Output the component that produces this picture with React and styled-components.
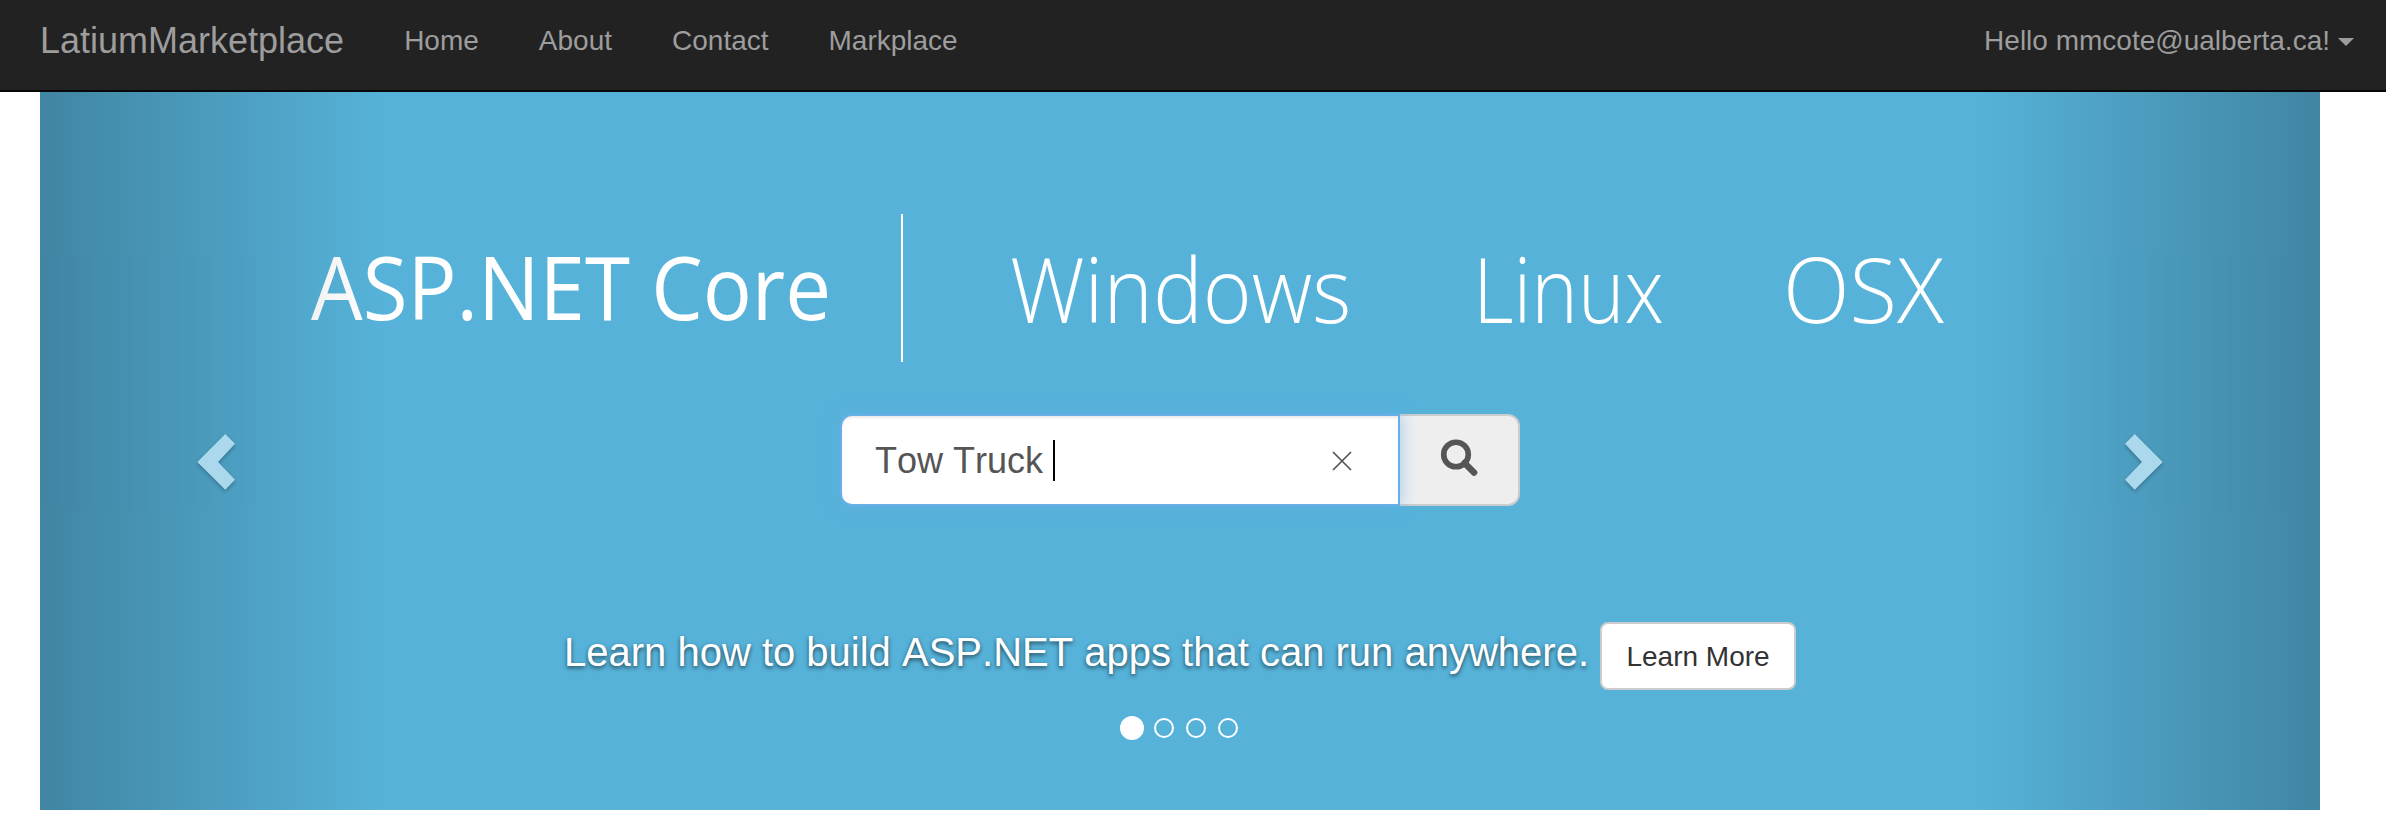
import React from 'react';
import styled, { createGlobalStyle } from 'styled-components';

const GlobalStyle = createGlobalStyle`
  * { box-sizing: border-box; }
  body {
    margin: 0;
    background: #fff;
    font-family: "Liberation Sans", Arial, sans-serif;
    font-size: 28px;
    line-height: 40px;
  }
`;

const Navbar = styled.nav`
  display: flex;
  align-items: flex-start;
  height: 92px;
  padding: 21px 32px 0 40px;
  background: #222;
  border-bottom: 2px solid #080808;
  color: #9d9d9d;
  white-space: nowrap;
`;

const Brand = styled.a`
  margin-right: 30px;
  font-size: 36px;
`;

const NavLinks = styled.div`
  display: flex;
  flex: 1;
`;

const NavLink = styled.a`
  padding: 0 30px;
`;

const UserMenu = styled.a`
  display: flex;
  align-items: flex-start;
`;

const Caret = styled.span`
  margin: 17px 0 0 8px;
  border-top: 8px solid #9d9d9d;
  border-left: 8px solid transparent;
  border-right: 8px solid transparent;
`;

const Carousel = styled.main`
  position: relative;
  display: flex;
  flex-direction: column;
  align-items: center;
  width: 2280px;
  height: 718px;
  margin-left: 40px;
  padding-top: 122px;
  background: #56b2d9;
`;

const Banner = styled.div`
  display: flex;
  align-self: stretch;
  height: 148px;
  padding-left: 271px;
  color: #fff;
  font-family: "Open Sans", "Noto Sans", sans-serif;
  line-height: 148px;
  white-space: nowrap;
`;

const Product = styled.div`
  width: 590px;
  margin-top: -2px;
  font-size: 87px;
`;

const Divider = styled.div`
  width: 2px;
  margin-right: 107px;
  background: #fff;
`;

const Platform = styled.div`
  width: ${(p) => p.$width}px;
  font-size: 91px;
  font-weight: 300;
`;

const Fit = styled.span`
  display: inline-block;
  transform: scaleX(${(p) => p.$scale});
  transform-origin: left center;
`;

const SearchGroup = styled.form`
  display: flex;
  z-index: 2;
  width: 680px;
  height: 92px;
  margin-top: 52px;
`;

const SearchField = styled.div`
  z-index: 1;
  display: flex;
  align-items: center;
  width: 560px;
  padding: 2px 46px 0 33px;
  border: 2px solid #66afe9;
  border-radius: 12px 0 0 12px;
  background: #fff;
  box-shadow: inset 0 2px 2px rgba(0, 0, 0, 0.075), 0 0 16px rgba(102, 175, 233, 0.6);
  color: #555;
  font-size: 36px;
  font-kerning: none;
  white-space: pre;
`;

const TextCaret = styled.span`
  width: 2px;
  height: 41px;
  margin-top: -2px;
  background: #000;
`;

const ClearIcon = styled.svg`
  width: 20px;
  height: 20px;
  margin-left: auto;
`;

const SearchButton = styled.button`
  display: flex;
  justify-content: center;
  width: 120px;
  padding: 23px 0 0;
  border: 2px solid #ccc;
  border-left: 0;
  border-radius: 0 12px 12px 0;
  background: #eee;
`;

const Caption = styled.div`
  z-index: 2;
  display: flex;
  align-items: flex-start;
  gap: 11px;
  margin-top: 116px;
  height: 68px;
  color: #fff;
  font-size: 40px;
  font-kerning: none;
  line-height: 60px;
  text-shadow: 0 2px 4px rgba(0, 0, 0, 0.6);
  white-space: nowrap;
`;

const LearnButton = styled.button`
  width: 196px;
  height: 68px;
  padding: 1px 0 0;
  border: 2px solid #ccc;
  border-radius: 8px;
  background: #fff;
  color: #333;
  font: 28px/40px "Liberation Sans", Arial, sans-serif;
`;

const Indicators = styled.div`
  z-index: 2;
  display: flex;
  align-items: center;
  gap: 12px;
  height: 24px;
  margin: 26px 2px 0 0;
`;

const Dot = styled.span`
  width: ${(p) => (p.$active ? 24 : 20)}px;
  height: ${(p) => (p.$active ? 24 : 20)}px;
  margin-right: ${(p) => (p.$active ? -2 : 0)}px;
  border: 2px solid #fff;
  border-radius: 50%;
  background: ${(p) => (p.$active ? '#fff' : 'transparent')};
`;

const Control = styled.a`
  position: absolute;
  top: 0;
  bottom: 0;
  ${(p) => p.$side}: 0;
  display: flex;
  justify-content: ${(p) => (p.$side === 'left' ? 'flex-start' : 'flex-end')};
  width: 342px;
  padding: 342px 157px 0;
  background: linear-gradient(to ${(p) => (p.$side === 'left' ? 'right' : 'left')}, rgba(0, 0, 0, 0.5), rgba(0, 0, 0, 0.0001));
  opacity: 0.5;
`;

const Chevron = styled.svg`
  flex: none;
  width: 38px;
  height: 56px;
  overflow: visible;
  filter: drop-shadow(0 2px 2px rgba(0, 0, 0, 0.6));
`;

const NAV = ['Home', 'About', 'Contact', 'Markplace'];

export default function App() {
  return (
    <>
      <GlobalStyle />
      <Navbar>
        <Brand>LatiumMarketplace</Brand>
        <NavLinks>
          {NAV.map((label) => <NavLink key={label}>{label}</NavLink>)}
        </NavLinks>
        <UserMenu>Hello mmcote@ualberta.ca!<Caret /></UserMenu>
      </Navbar>
      <Carousel>
        <Banner>
          <Product><Fit $scale={0.939}>ASP.NET Core</Fit></Product>
          <Divider />
          <Platform $width={463}><Fit $scale={0.919}>Windows</Fit></Platform>
          <Platform $width={310}><Fit $scale={0.868}>Linux</Fit></Platform>
          <Platform $width={180}><Fit $scale={0.957}>OSX</Fit></Platform>
        </Banner>
        <SearchGroup>
          <SearchField>
            {'Tow Truck '}
            <TextCaret />
            <ClearIcon viewBox="0 0 20 20" fill="none" stroke="#555" strokeWidth="1.7">
              <path d="M1 1L19 19M19 1L1 19" />
            </ClearIcon>
          </SearchField>
          <SearchButton type="button" aria-label="Search">
            <svg width="38" height="38" viewBox="0 0 38 38" fill="none" stroke="#555">
              <circle cx="16" cy="15.5" r="12.3" strokeWidth="5.6" />
              <path d="M24.5 24L34 33.5" strokeWidth="6.6" strokeLinecap="round" />
            </svg>
          </SearchButton>
        </SearchGroup>
        <Caption>
          <span>Learn how to build ASP.NET apps that can run anywhere.</span>
          <LearnButton type="button">Learn More</LearnButton>
        </Caption>
        <Indicators>
          <Dot $active />
          <Dot />
          <Dot />
          <Dot />
        </Indicators>
        <Control $side="left">
          <Chevron viewBox="0 0 38 56">
            <path d="M0.3 28L28.3 0L38 9.8L21 28L38 45.7L28.3 55.7Z" fill="#fff" />
          </Chevron>
        </Control>
        <Control $side="right">
          <Chevron viewBox="0 0 38 56">
            <path d="M37.7 28L9.7 0L0 9.8L17 28L0 45.7L9.7 55.7Z" fill="#fff" />
          </Chevron>
        </Control>
      </Carousel>
    </>
  );
}
